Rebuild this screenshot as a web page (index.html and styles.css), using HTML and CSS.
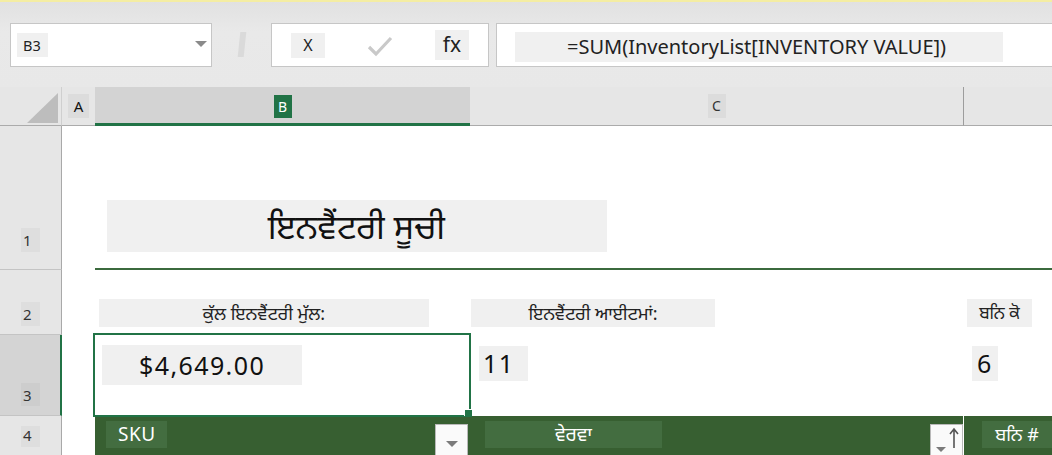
FILE: index.html
```html
<!DOCTYPE html>
<html lang="pa">
<head>
<meta charset="utf-8">
<title>Inventory</title>
<link rel="stylesheet" href="styles.css">
</head>
<body>
<div class="app">
  <div class="ribbon">
    <div class="namebox">
      <span class="cellref">B3</span>
      <span class="dd"></span>
    </div>
    <div class="sep"></div>
    <div class="fbtns">
      <span class="fb fb-x">X</span>
      <svg class="check" width="26" height="24" viewBox="0 0 26 24"><path d="M2 13 L9 20 L24 4" fill="none" stroke="#c9c9c9" stroke-width="3.2"/></svg>
      <span class="fb fb-fx">fx</span>
    </div>
    <div class="formula">
      <span class="ftext">=SUM(InventoryList[INVENTORY VALUE])</span>
    </div>
  </div>

  <div class="sheet">
    <!-- header row -->
    <div class="corner"><svg width="31" height="30" viewBox="0 0 31 30"><polygon points="31,0 31,30 0,30" fill="#bdbdbd"/></svg></div>
    <div class="ch ch-a"><span class="lbl">A</span></div>
    <div class="ch ch-b"><span class="lbl lbl-sel">B</span></div>
    <div class="ch ch-c"><span class="lbl">C</span></div>
    <div class="ch ch-d"></div>

    <!-- row 1 -->
    <div class="rh rh-1"><span class="num">1</span></div>
    <div class="cell"></div>
    <div class="cell title-cell">
      <div class="title-box">ਇਨਵੈਂਟਰੀ ਸੂਚੀ</div>
    </div>

    <!-- row 2 -->
    <div class="rh rh-2"><span class="num">2</span></div>
    <div class="cell"></div>
    <div class="cell r2"><div class="label lbl-b">ਕੁੱਲ ਇਨਵੈਂਟਰੀ ਮੁੱਲ:</div></div>
    <div class="cell r2"><div class="label lbl-c">ਇਨਵੈਂਟਰੀ ਆਈਟਮਾਂ:</div></div>
    <div class="cell r2"><div class="label lbl-d">ਬਨਿ ਕੋ</div></div>

    <!-- row 3 -->
    <div class="rh rh-3"><span class="num">3</span></div>
    <div class="cell"></div>
    <div class="cell r3 active"><div class="val val-b">$4,649.00</div><span class="handle"></span></div>
    <div class="cell r3"><div class="val val-c">11</div></div>
    <div class="cell r3"><div class="val val-d">6</div></div>

    <!-- row 4 -->
    <div class="rh rh-4"><span class="num">4</span></div>
    <div class="cell"></div>
    <div class="th th-b">
      <span class="thl thl-sku">SKU</span>
      <span class="fbtn"><svg width="12" height="6" viewBox="0 0 12 6"><polygon points="0,0 12,0 6,6" fill="#7b7b7b"/></svg></span>
    </div>
    <div class="th th-c">
      <span class="thl thl-desc">ਵੇਰਵਾ</span>
      <span class="fbtn sort"><svg width="30" height="30" viewBox="0 0 30 30"><polygon points="4,22 14,22 9,27" fill="#7b7b7b"/><path d="M22 23 V5 M18 9 L22 4 L26 9" fill="none" stroke="#555" stroke-width="1.6"/></svg></span>
    </div>
    <div class="th th-d">
      <span class="thl thl-bin">ਬਨਿ #</span>
    </div>
  </div>
</div>
</body>
</html>
```

FILE: styles.css
```css
* { box-sizing: border-box; }

html, body {
  margin: 0;
  padding: 0;
}

body {
  width: 1052px;
  height: 455px;
  overflow: hidden;
  background: #e6e6e6;
  font-family: "Noto Sans", "Open Sans", "Noto Sans Gurmukhi", sans-serif;
  color: #222;
}

.app {
  width: 1052px;
  height: 455px;
  overflow: hidden;
}

/* ---------- ribbon / formula bar ---------- */
.ribbon {
  height: 87px;
  border-top: 2px solid #f4eda3;
  background: linear-gradient(#e1e1e1, #e9e9e9 30px, #e8e8e8);
  display: flex;
  align-items: flex-start;
  padding-top: 21px;
  padding-left: 10px;
}

.namebox {
  width: 202px;
  height: 44px;
  background: #fff;
  border: 1px solid #c6c6c6;
  display: flex;
  align-items: center;
  justify-content: space-between;
  padding: 0 4px 0 6px;
}

.cellref {
  width: 31px;
  height: 24px;
  background: #f0f0f0;
  font-size: 14.5px;
  line-height: 24px;
  padding-left: 6px;
  color: #222;
}

.dd {
  width: 0;
  height: 0;
  border-left: 6px solid transparent;
  border-right: 6px solid transparent;
  border-top: 6px solid #8a8a8a;
  margin-top: -3px;
}

.sep {
  width: 6px;
  height: 25px;
  margin: 9px 0 0 27px;
  background: #dadada;
  transform: skewX(-6deg);
}

.fbtns {
  width: 218px;
  height: 44px;
  margin-left: 26px;
  background: #fff;
  border: 1px solid #c6c6c6;
  display: flex;
  align-items: center;
  padding-left: 19px;
}

.fb {
  background: #f0f0f0;
  text-align: center;
  color: #222;
}

.fb-x {
  width: 34px;
  height: 25px;
  line-height: 25px;
  font-size: 16px;
}

.check {
  margin-left: 42px;
  margin-top: 2px;
}

.fb-fx {
  width: 34px;
  height: 30px;
  line-height: 28px;
  font-size: 21px;
  margin-left: 42px;
}

.formula {
  flex: 1;
  height: 44px;
  margin-left: 7px;
  margin-right: -4px;
  background: #fff;
  border: 1px solid #c6c6c6;
  border-right: none;
  padding: 8px 0 0 18px;
}

.ftext {
  display: block;
  width: 488px;
  height: 30px;
  background: #f0f0f0;
  padding-left: 52px;
  font-size: 20px;
  line-height: 30px;
  color: #222;
  white-space: nowrap;
}

/* ---------- sheet grid ---------- */
.sheet {
  display: grid;
  grid-template-columns: 62px 33px 375px 494px 1fr;
  grid-template-rows: 39px 144px 65px 81px 39px;
}

.corner {
  border-right: 1px solid #cfcfcf;
  border-bottom: 1px solid #ababab;
  padding: 6px 0 0 27px;
}
.corner svg { display: block; }

.ch {
  border-bottom: 1px solid #ababab;
  display: flex;
  align-items: center;
  justify-content: center;
  background: #e6e6e6;
}

.ch-b {
  background: #d3d3d3;
  border-bottom: 3px solid #217346;
  padding-top: 2px;
}

.ch-c {
  border-right: 1px solid #9d9d9d;
}

.lbl {
  min-width: 18px;
  height: 24px;
  padding: 0 3px;
  background: #dcdcdc;
  font-size: 14px;
  line-height: 24px;
  text-align: center;
  color: #333;
}
.ch-a .lbl { width: 21px; font-size: 15px; color: #111; }

.lbl-sel {
  background: #217346;
  color: #fff;
  height: 23px;
}

.rh {
  border-right: 1px solid #a9a9a9;
  border-bottom: 1px solid #c4c4c4;
  display: flex;
  align-items: flex-end;
  padding-left: 21px;
}

.num {
  width: 19px;
  height: 24px;
  background: #dedede;
  font-size: 15px;
  line-height: 24px;
  padding-left: 2px;
  color: #333;
}

.rh-1 { padding-bottom: 17px; }
.rh-2 { padding-bottom: 8px; }
.rh-3 {
  background: #d4d4d4;
  border-right: 2px solid #217346;
  padding-bottom: 9px;
}
.rh-3 .num { background: #cdcdcd; height: 23px; }
.rh-4 { border-bottom: none; padding-bottom: 8px; }
.rh-4 .num { height: 21px; line-height: 18px; }

.cell {
  background: #fff;
}

/* row 1 */
.title-cell {
  grid-column: 3 / 6;
  border-bottom: 2px solid #3b6a3e;
  display: flex;
  align-items: flex-end;
  padding: 0 0 16px 12px;
}

.title-box {
  width: 500px;
  height: 52px;
  background: #f0f0f0;
  font-size: 34px;
  line-height: 52px;
  text-align: center;
  padding-right: 1px;
  color: #111;
  white-space: nowrap;
}

/* row 2 */
.r2 {
  padding-top: 29px;
}

.label {
  height: 28px;
  background: #f0f0f0;
  font-size: 18px;
  line-height: 28px;
  text-align: center;
  color: #222;
  white-space: nowrap;
  overflow: hidden;
}
.lbl-b { width: 330px; margin-left: 4px; }
.lbl-c { width: 244px; margin-left: 1px; }
.lbl-d { width: 65px; margin-left: 3px; font-size: 17px; }

/* row 3 */
.r3 { padding-top: 11px; }

.active {
  position: relative;
  padding-top: 10px;
}
.active::after {
  content: "";
  position: absolute;
  left: -2px;
  top: -2px;
  right: -1px;
  bottom: -1px;
  border: 2px solid #217346;
  pointer-events: none;
}

.handle {
  position: absolute;
  right: -2px;
  bottom: -1px;
  width: 7px;
  height: 7px;
  background: #217346;
  box-shadow: -1px -1px 0 #fff;
  z-index: 2;
}

.val {
  background: #f0f0f0;
  color: #111;
  font-size: 25px;
  letter-spacing: 1.4px;
  white-space: nowrap;
}

.val-b {
  width: 200px;
  height: 40px;
  margin-left: 7px;
  padding-left: 37px;
  line-height: 40px;
}

.val-c {
  width: 49px;
  height: 35px;
  margin-left: 9px;
  padding-left: 4px;
  line-height: 35px;
}

.val-d {
  width: 26px;
  height: 35px;
  margin-left: 8px;
  padding-left: 5px;
  line-height: 35px;
}

/* row 4: table header */
.th {
  background: #375f31;
  display: flex;
  align-items: flex-start;
  padding-top: 5px;
}

.th-c {
  border-right: 3px solid #fff;
  margin-right: -2px;
}

.thl {
  height: 27px;
  background: #436d40;
  color: #fff;
  font-size: 19px;
  line-height: 26px;
  text-align: center;
  white-space: nowrap;
}

.thl-sku {
  width: 61px;
  margin-left: 11px;
  font-size: 19px;
  letter-spacing: 0.5px;
  text-align: left;
  padding-left: 12px;
}

.thl-desc {
  width: 177px;
  margin-left: 15px;
}

.thl-bin {
  width: 70px;
  margin-left: 18px;
  font-size: 18px;
}

.fbtn {
  width: 33px;
  height: 34px;
  margin-top: 3px;
  background: #fafafa;
  border: 1px solid #b9b9b9;
  display: flex;
  align-items: flex-start;
  justify-content: center;
  padding-top: 16px;
  margin-left: auto;
  margin-right: 2px;
}

.sort {
  padding-top: 0;
  margin-right: 0;
  align-items: flex-start;
}
.sort svg { display: block; }
```
